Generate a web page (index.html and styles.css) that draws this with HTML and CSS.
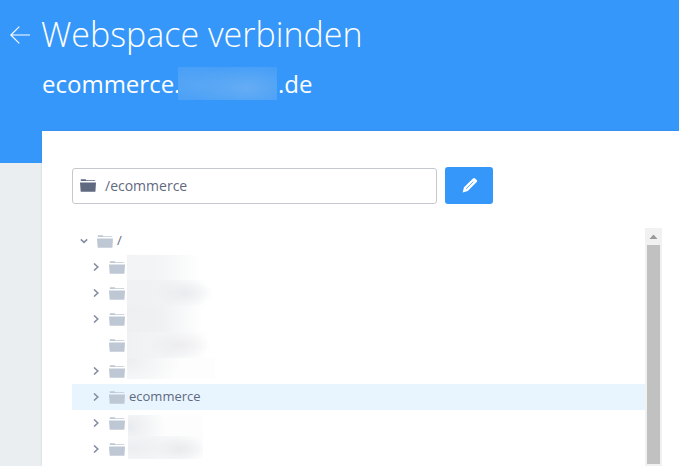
FILE: index.html
```html
<!DOCTYPE html>
<html lang="de">
<head>
<meta charset="utf-8">
<title>Webspace verbinden</title>
<link rel="stylesheet" href="styles.css">
</head>
<body>
<svg class="defs" width="0" height="0">
  <symbol id="folder" viewBox="0 0 16 13"><path d="M.8.2h4.8l.8 1h8.8v.9H.8zM0 3.4h16l-.6 9.4H.7z"/></symbol>
  <symbol id="right" viewBox="0 0 8 8"><path d="M2 .5 5.8 4 2 7.5"/></symbol>
  <symbol id="down" viewBox="0 0 8 8"><path d="M.8 2.4 4 5.4l3.2-3"/></symbol>
</svg>
<header class="header">
  <div class="title-row">
    <svg class="back" viewBox="0 0 20 18"><path d="M20 9H.8M9.3.6.8 9l8.5 8.4"/></svg>
    <h1 class="title">Webspace verbinden</h1>
  </div>
  <p class="domain"><span class="domain-name">ecommerce.</span><span class="domain-mask"></span><span class="domain-tld">.de</span></p>
</header>
<main class="card">
  <div class="path-row">
    <div class="path-field"><svg class="folder"><use href="#folder"/></svg><span class="path-text">/ecommerce</span></div>
    <button class="edit" aria-label="Bearbeiten"><svg class="pencil" viewBox="0 0 16 16"><path class="pencil-body" d="M.6 15.4 2 10.2 11 1.4q1-1 2.1 0l1.6 1.6q1 1 0 2L5.8 13.9z"/><path class="pencil-line" d="m4.2 11.8 7-7"/></svg></button>
  </div>
  <div class="browser">
    <ul class="tree">
      <li class="row root"><svg class="chevron"><use href="#down"/></svg><svg class="folder"><use href="#folder"/></svg><span class="label">/</span></li>
      <li class="row"><svg class="chevron"><use href="#right"/></svg><svg class="folder"><use href="#folder"/></svg><span class="mask mask-a"></span></li>
      <li class="row"><svg class="chevron"><use href="#right"/></svg><svg class="folder"><use href="#folder"/></svg><span class="mask mask-b"></span></li>
      <li class="row"><svg class="chevron"><use href="#right"/></svg><svg class="folder"><use href="#folder"/></svg><span class="mask mask-c"></span></li>
      <li class="row"><svg class="chevron"></svg><svg class="folder"><use href="#folder"/></svg><span class="mask mask-d"></span></li>
      <li class="row"><svg class="chevron"><use href="#right"/></svg><svg class="folder"><use href="#folder"/></svg><span class="mask mask-e"></span></li>
      <li class="row selected"><svg class="chevron"><use href="#right"/></svg><svg class="folder"><use href="#folder"/></svg><span class="label">ecommerce</span></li>
      <li class="row"><svg class="chevron"><use href="#right"/></svg><svg class="folder"><use href="#folder"/></svg><span class="mask mask-f"></span></li>
      <li class="row"><svg class="chevron"><use href="#right"/></svg><svg class="folder"><use href="#folder"/></svg><span class="mask mask-g"></span></li>
    </ul>
    <div class="scrollbar"><svg class="scroll-up" viewBox="0 0 17 17"><path d="m4.5 11 4-4.5 4 4.5z"/></svg><div class="thumb"></div></div>
  </div>
</main>
</body>
</html>
```

FILE: styles.css
```css
* { box-sizing: border-box; }
html, body { height: 100%; }
body {
  margin: 0;
  overflow: hidden;
  background: #ebeef1;
  color: #5f6980;
  font-family: "Open Sans", "Noto Sans", sans-serif;
}
svg { display: block; flex: none; }
.defs { position: absolute; }

.header { height: 163px; padding: 10px 0 0 10px; background: #3697fa; color: #fff; }
.title-row { display: flex; align-items: center; height: 50px; }
.back { width: 20px; height: 18px; margin-right: 12px; fill: none; stroke: #fff; stroke-width: 1.2; }
.title { margin: 0 0 2px -1px; font-size: 34px; line-height: 50px; font-weight: 300; white-space: nowrap; }
.domain { display: flex; align-items: center; height: 33px; margin: 7px 0 0 32px; font-size: 24px; line-height: 33px; }
.domain-name { width: 136px; }
.domain-mask {
  width: 99px;
  height: 33px;
  margin-right: 1px;
  background: radial-gradient(ellipse 55px 24px at 68px 21px, #66adf4, transparent),
    radial-gradient(ellipse 45px 24px at 16px 18px, #58a6f5, transparent), #459ef7;
}

.card { height: 335px; margin: -32px 0 0 42px; padding: 36px 17px 0 30px; background: #fff; box-shadow: 0 0 2px rgba(60, 80, 100, .2); }
.path-row { display: flex; align-items: center; gap: 8px; height: 37px; }
.path-field { display: flex; align-items: center; width: 365px; height: 36px; margin-top: 1px; padding-left: 7px; border: 1px solid #c5c9cd; border-radius: 3px; font-size: 14px; }
.path-field .folder { margin: 0 9px 2px 0; fill: #5f6980; }
.path-text { margin-bottom: 2px; }
.edit { display: flex; align-items: center; justify-content: center; width: 48px; height: 37px; padding: 0 0 2px 1px; border: 0; border-radius: 3px; background: #3697fa; }
.pencil { width: 16px; height: 16px; }
.pencil-body { fill: #fff; }
.pencil-line { fill: none; stroke: #3697fa; stroke-width: .8; }

.browser { display: flex; height: 238px; margin-top: 24px; }
.tree { flex: 1; margin: 0; padding: 0; list-style: none; }
.row { display: flex; align-items: center; height: 26px; padding-left: 20px; }
.root { padding-left: 8px; }
.selected { background: #e8f5ff; }
.chevron { width: 8px; height: 8px; margin-right: 9px; fill: none; stroke: #858da0; stroke-width: 1.6; }
.folder { width: 16px; height: 13px; fill: #bec7d4; }
.row .label { margin: 0 0 2px 4px; font-size: 13px; line-height: 24px; }
.root .label { margin-left: 4px; }

.mask { width: 88px; height: 26px; margin-left: 2px; }
.mask-a { height: 25px; align-self: flex-end; background: linear-gradient(#fff0 60%, #eff1f3 140%), linear-gradient(90deg, #f2f4f5, #f4f5f6 35px, transparent 74px); }
.mask-a { background: linear-gradient(90deg, #f1f3f4, #f3f5f6 35px, transparent 74px); }
.mask-b { background: radial-gradient(ellipse 30px 14px at 57px 13px, #e9ebee, #e9ebee00), linear-gradient(90deg, #eef0f2, #f0f2f4 40px, transparent 80px); }
.mask-c { background: linear-gradient(90deg, #edeff1, #eff1f3 35px, transparent 76px); }
.mask-d { background: radial-gradient(ellipse 32px 14px at 52px 13px, #ededf0, #ededf000), linear-gradient(90deg, #eff1f3, #f3f4f5 40px, transparent 82px); }
.mask-e { height: 21px; align-self: flex-start; background: radial-gradient(ellipse 52px 34px at 2px 3px, #eceff1, transparent), #fdfdfd; }
.mask-f { width: 75px; height: 21px; margin-left: 3px; align-self: flex-end; background: radial-gradient(ellipse 36px 30px at 2px 12px, #e9ecef, transparent), #fdfdfd; }
.mask-g { width: 75px; height: 23px; margin-left: 3px; align-self: flex-start; background: radial-gradient(ellipse 26px 13px at 52px 13px, #e9ebed, #e9ebed00), radial-gradient(ellipse 75px 32px at 6px 12px, #eceef1, transparent), #fdfdfd; }

.scrollbar { width: 17px; padding: 0 2px; background: #f1f1f1; }
.scroll-up { width: 17px; height: 17px; margin-left: -2px; fill: #999; }
.thumb { width: 13px; height: 219px; background: #c1c1c1; }
```
